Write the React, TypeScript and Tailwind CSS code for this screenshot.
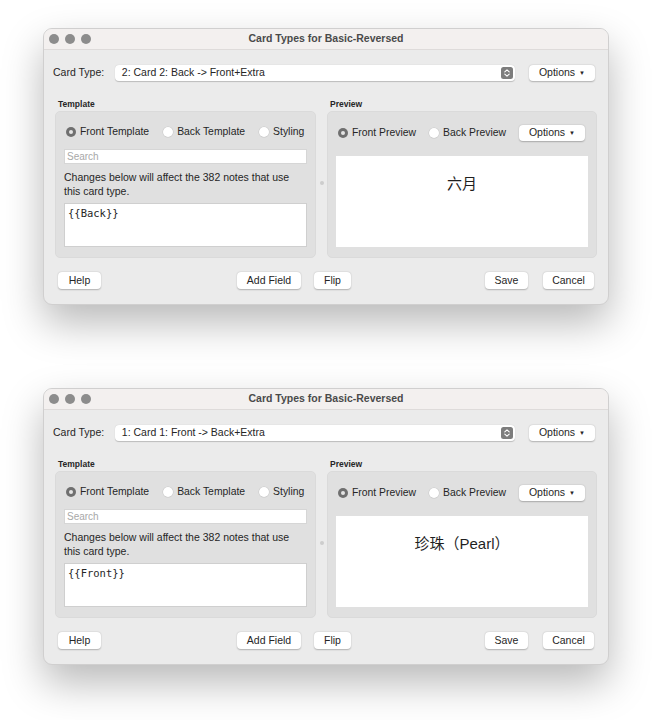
import React from "react";

const font = { fontFamily: '"Liberation Sans", "Noto Sans CJK SC", sans-serif' };

function Radio({ checked, label }: { checked?: boolean; label: string }) {
    return (
        <div className="flex items-center gap-[4px] whitespace-nowrap">
            {checked ? (
                <span className="w-[10px] h-[10px] shrink-0 rounded-full bg-[#6f6f6f] flex items-center justify-center">
                    <span className="w-[4px] h-[4px] rounded-full bg-[#e4e4e4]" />
                </span>
            ) : (
                <span className="w-[10px] h-[10px] shrink-0 rounded-full bg-white shadow-[0_0_0_0.5px_rgba(0,0,0,0.12)]" />
            )}
            <span className="text-[10.4px] leading-[12px] text-[#262626]">{label}</span>
        </div>
    );
}

function Button({ label, width }: { label: string; width: string }) {
    return (
        <div
            className={`${width} h-[17px] rounded-[4px] bg-white shadow-[0_0.5px_1.5px_rgba(0,0,0,0.25)] flex items-center justify-center text-[10.5px] text-[#262626]`}
        >
            {label}
        </div>
    );
}

function OptionsButton() {
    return (
        <div className="w-[66px] h-[16px] rounded-[4px] bg-white shadow-[0_0.5px_1.5px_rgba(0,0,0,0.25)] flex items-center justify-center gap-[4px] text-[10.5px] text-[#262626]">
            <span>Options</span>
            <span className="text-[6px] leading-none">▼</span>
        </div>
    );
}

function Window({ cardType, field, preview }: { cardType: string; field: string; preview: string }) {
    return (
        <div className="w-[566px] ml-[43px] rounded-[9px] bg-[#ebebeb] border border-[#d0cfcf] shadow-[0_18px_40px_rgba(0,0,0,0.28)] overflow-hidden">
            {/* title bar */}
            <div className="relative h-[21px] bg-[#f3f0ef] border-b border-[#dedbda] flex items-center justify-center">
                <div className="absolute left-[5px] top-[5px] flex gap-[6px]">
                    <span className="w-[10px] h-[10px] rounded-full bg-[#8c8c8c]" />
                    <span className="w-[10px] h-[10px] rounded-full bg-[#8c8c8c]" />
                    <span className="w-[10px] h-[10px] rounded-full bg-[#8c8c8c]" />
                </div>
                <span className="text-[10.5px] font-bold text-[#4a4a4a]">Card Types for Basic-Reversed</span>
            </div>

            <div className="px-[13px] pt-[15px] pb-[15px]">
                {/* card type row */}
                <div className="flex items-center">
                    <span className="w-[62px] -ml-[4px] text-[10.5px] text-[#262626]">Card Type:</span>
                    <div className="w-[401px] h-[16px] rounded-[4px] bg-white shadow-[0_0.5px_1px_rgba(0,0,0,0.2)] flex items-center justify-between pl-[7px] pr-[2px]">
                        <span className="text-[10.5px] text-[#262626]">{cardType}</span>
                        <svg width="12" height="12" viewBox="0 0 12 12">
                            <rect x="0" y="0" width="12" height="12" rx="2.5" fill="#7d7d7d" />
                            <path d="M3.8 4.8 L6 2.8 L8.2 4.8" stroke="white" strokeWidth="1.1" fill="none" strokeLinecap="round" strokeLinejoin="round" />
                            <path d="M3.8 7.2 L6 9.2 L8.2 7.2" stroke="white" strokeWidth="1.1" fill="none" strokeLinecap="round" strokeLinejoin="round" />
                        </svg>
                    </div>
                    <div className="ml-[14px]">
                        <OptionsButton />
                    </div>
                </div>

                {/* panels */}
                <div className="flex mt-[17px] -mx-[2px]">
                    <div className="w-[262px] flex flex-col">
                        <span className="ml-[3px] text-[8.5px] font-bold text-[#262626] leading-[12px]">Template</span>
                        <div className="mt-[1px] h-[147px] rounded-[5px] bg-[#e0e0e0] border border-[#dadada] px-[8px] pt-[14px]">
                            <div className="flex items-center gap-[14px] pl-[2px]">
                                <Radio checked label="Front Template" />
                                <Radio label="Back Template" />
                                <Radio label="Styling" />
                            </div>
                            <div className="mt-[11px] h-[15px] bg-white border border-[#d6d6d6] flex items-center px-[2px] text-[10px] text-[#a8a8a8]">
                                Search
                            </div>
                            <p className="mt-[6px] text-[10.5px] leading-[14px] text-[#262626]">
                                Changes below will affect the 382 notes that use
                                <br />
                                this card type.
                            </p>
                            <div
                                className="mt-[5px] h-[44px] bg-white border border-[#cfcfcf] px-[3px] pt-[2px] text-[10.5px] text-[#262626]"
                                style={{ fontFamily: '"DejaVu Sans Mono", monospace' }}
                            >
                                {field}
                            </div>
                        </div>
                    </div>
                    <div className="w-[11px] flex items-center justify-center pt-[10px]">
                        <span className="w-[4px] h-[4px] rounded-full bg-[#cdcdcd]" />
                    </div>
                    <div className="w-[271px] flex flex-col">
                        <span className="ml-[3px] text-[8.5px] font-bold text-[#262626] leading-[12px]">Preview</span>
                        <div className="mt-[1px] h-[147px] rounded-[5px] bg-[#e0e0e0] border border-[#dadada] px-[8px] pt-[13px]">
                            <div className="flex items-center pl-[2px] pr-[3px]">
                                <div className="flex items-center gap-[13px]">
                                    <Radio checked label="Front Preview" />
                                    <Radio label="Back Preview" />
                                </div>
                                <div className="ml-auto">
                                    <OptionsButton />
                                </div>
                            </div>
                            <div className="mt-[15px] h-[91px] bg-white flex justify-center pt-[17px]">
                                <span className="text-[15px] text-[#1f1f1f]">{preview}</span>
                            </div>
                        </div>
                    </div>
                </div>

                {/* bottom buttons */}
                <div className="flex items-center mt-[14px] px-[1px]">
                    <Button label="Help" width="w-[43px]" />
                    <div className="ml-[136px]">
                        <Button label="Add Field" width="w-[64px]" />
                    </div>
                    <div className="ml-[13px]">
                        <Button label="Flip" width="w-[37px]" />
                    </div>
                    <div className="flex-1" />
                    <Button label="Save" width="w-[43px]" />
                    <div className="ml-[15px]">
                        <Button label="Cancel" width="w-[51px]" />
                    </div>
                </div>
            </div>
        </div>
    );
}

export default function App() {
    return (
        <div className="w-[652px] h-[720px] bg-white pt-[28px] flex flex-col gap-[83px]" style={font}>
            <Window cardType="2: Card 2: Back -> Front+Extra" field="{{Back}}" preview="六月" />
            <Window cardType="1: Card 1: Front -> Back+Extra" field="{{Front}}" preview="珍珠（Pearl）" />
        </div>
    );
}
